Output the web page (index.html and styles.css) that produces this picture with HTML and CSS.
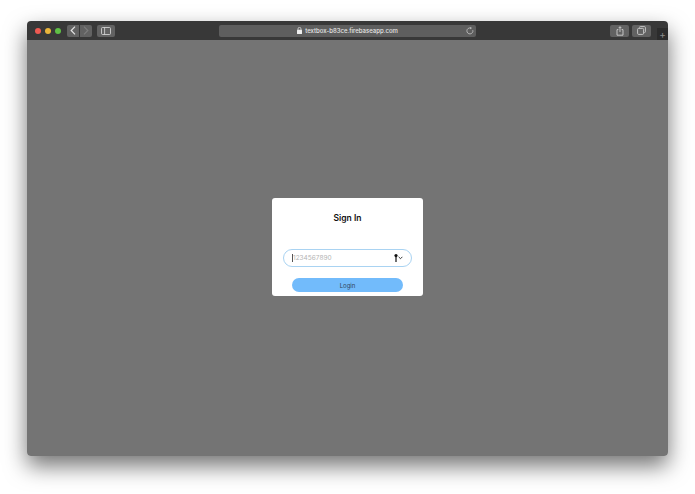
FILE: index.html
```html
<!DOCTYPE html>
<html lang="en">
<head>
  <meta charset="UTF-8">
  <meta name="viewport" content="width=device-width, initial-scale=1.0">
  <title>Sign In</title>
  <link rel="stylesheet" href="styles.css">
</head>
<body>
  <div class="window">
    <!-- Browser toolbar -->
    <div class="toolbar">
      <div class="lights">
        <span class="light red"></span>
        <span class="light yellow"></span>
        <span class="light green"></span>
      </div>
      <div class="nav">
        <span class="nav-btn">
          <svg width="6" height="9" viewBox="0 0 6 9"><path d="M5 .7 1.2 4.5 5 8.3" fill="none" stroke="#e4e4e4" stroke-width="1.2"/></svg>
        </span>
        <span class="nav-btn">
          <svg width="6" height="9" viewBox="0 0 6 9"><path d="M1 .7 4.8 4.5 1 8.3" fill="none" stroke="#7d7d7d" stroke-width="1.2"/></svg>
        </span>
      </div>
      <span class="tool-btn sidebar-btn">
        <svg width="10" height="8" viewBox="0 0 10 8"><rect x=".5" y=".5" width="9" height="7" rx="1" fill="none" stroke="#ddd" stroke-width=".8"/><path d="M3.6 .5v7" stroke="#ddd" stroke-width=".8"/></svg>
      </span>
      <div class="address">
        <svg class="lock" width="5" height="7" viewBox="0 0 5 7"><rect y="2.8" width="5" height="4.2" rx=".6" fill="#eee"/><path d="M1 3V1.9a1.5 1.5 0 0 1 3 0V3" fill="none" stroke="#eee" stroke-width=".7"/></svg>
        <span class="url">textbox-b83ce.firebaseapp.com</span>
        <svg class="reload" width="8" height="8" viewBox="0 0 8 8"><path d="M6.8 3.2A3 3 0 1 1 4.6 1" fill="none" stroke="#c8c8c8" stroke-width=".8"/><path d="M4.2 0 6 1.1 4.2 2.2z" fill="#c8c8c8"/></svg>
      </div>
      <span class="tool-btn share-btn">
        <svg width="8" height="10" viewBox="0 0 8 10"><path d="M2.4 3.6H1v5.6h6V3.6H5.6" fill="none" stroke="#ddd" stroke-width=".8"/><path d="M4 6V.8M2.6 2.1 4 .7l1.4 1.4" fill="none" stroke="#ddd" stroke-width=".8"/></svg>
      </span>
      <span class="tool-btn tabs-btn">
        <svg width="9" height="9" viewBox="0 0 9 9"><rect x=".6" y="2.4" width="6" height="6" rx="1" fill="none" stroke="#ddd" stroke-width=".8"/><path d="M2.4 1.6q0-1 1-1h4q1 0 1 1v4q0 1-1 1" fill="none" stroke="#ddd" stroke-width=".8"/></svg>
      </span>
      <span class="new-tab">+</span>
    </div>

    <!-- Page content, dimmed behind the dialog -->
    <div class="page">
      <div class="dialog">
        <h2 class="dialog-title">Sign In</h2>
        <div class="phone-field">
          <span class="caret"></span>
          <span class="placeholder">1234567890</span>
          <svg class="key" width="9" height="8" viewBox="0 0 9 8"><circle cx="2" cy="1.6" r="1.6" fill="#111"/><path d="M2 2.5V8" stroke="#111" stroke-width="1.2"/><path d="m4.6 2.8 1.9 1.9 1.9-1.9" fill="none" stroke="#222" stroke-width=".9"/></svg>
        </div>
        <button class="login-btn">Login</button>
      </div>
    </div>
  </div>
</body>
</html>
```

FILE: styles.css
```css
html, body {
  height: 100%;
}

body {
  margin: 0;
  padding: 21px 27px 0 27px;
  box-sizing: border-box;
  background-color: #ffffff;
  font-family: Inter, "Liberation Sans", sans-serif;
  overflow: hidden;
}

/* Browser window */
.window {
  width: 641px;
  height: 435px;
  display: flex;
  flex-direction: column;
  border-radius: 4px;
  box-shadow: 0 10px 22px rgba(0, 0, 0, 0.55);
}

.toolbar {
  height: 19px;
  flex-shrink: 0;
  display: flex;
  align-items: center;
  padding-left: 8px;
  background-color: #383838;
  border-radius: 4px 4px 0 0;
}

.lights {
  display: flex;
  gap: 4px;
}

.light {
  width: 6px;
  height: 6px;
  border-radius: 50%;
}

.red { background-color: #ee5a52; }
.yellow { background-color: #e9b53b; }
.green { background-color: #5fc046; }

.nav {
  display: flex;
  gap: 1px;
  margin-left: 6px;
}

.nav-btn {
  width: 12px;
  height: 12px;
  display: flex;
  align-items: center;
  justify-content: center;
  background-color: #626262;
}

.nav-btn:first-child {
  border-radius: 2px 0 0 2px;
}

.nav-btn:last-child {
  border-radius: 0 2px 2px 0;
}

.tool-btn {
  height: 12px;
  display: flex;
  align-items: center;
  justify-content: center;
  background-color: #626262;
  border-radius: 2px;
}

.sidebar-btn {
  width: 18px;
  margin-left: 5px;
}

.address {
  width: 258px;
  height: 12px;
  margin-left: 104px;
  display: flex;
  align-items: center;
  justify-content: center;
  gap: 3px;
  background-color: #5e5e5e;
  border-radius: 2px;
  position: relative;
}

.url {
  font-size: 6px;
  font-weight: 500;
  color: #e6e6e6;
}

.reload {
  position: absolute;
  right: 2px;
  top: 2px;
}

.share-btn {
  width: 19px;
  margin-left: 134px;
}

.tabs-btn {
  width: 19px;
  margin-left: 3px;
}

.new-tab {
  width: 11px;
  height: 12px;
  margin-left: 6px;
  align-self: flex-end;
  background-color: #2c2c2c;
  color: #8a8a8a;
  font-size: 10px;
  line-height: 13px;
  text-align: center;
}

.page {
  flex: 1;
  display: flex;
  align-items: center;
  justify-content: center;
  background-color: #747474;
  border-radius: 0 0 4px 4px;
}

/* Sign in dialog */
.dialog {
  width: 151px;
  height: 98px;
  box-sizing: border-box;
  padding: 15px 11px 0 11px;
  margin-bottom: 2px;
  background-color: #ffffff;
  border-radius: 3px;
  display: flex;
  flex-direction: column;
  align-items: center;
}

.dialog-title {
  margin: 0;
  font-size: 8.5px;
  font-weight: 600;
  line-height: 11px;
  color: #111111;
}

.phone-field {
  width: 100%;
  height: 18px;
  box-sizing: border-box;
  margin-top: 25px;
  padding: 0 8px;
  display: flex;
  align-items: center;
  border: 1px solid #a9d3f2;
  border-radius: 9px;
}

.caret {
  width: 1px;
  height: 8px;
  background-color: #555555;
}

.placeholder {
  flex: 1;
  font-size: 6.5px;
  color: #b4b4b4;
}

.login-btn {
  width: 111px;
  height: 14px;
  margin-top: 11px;
  padding: 0;
  border: none;
  border-radius: 7px;
  background-color: #72bbfb;
  color: #2f4456;
  font-family: inherit;
  font-size: 6px;
}
```
